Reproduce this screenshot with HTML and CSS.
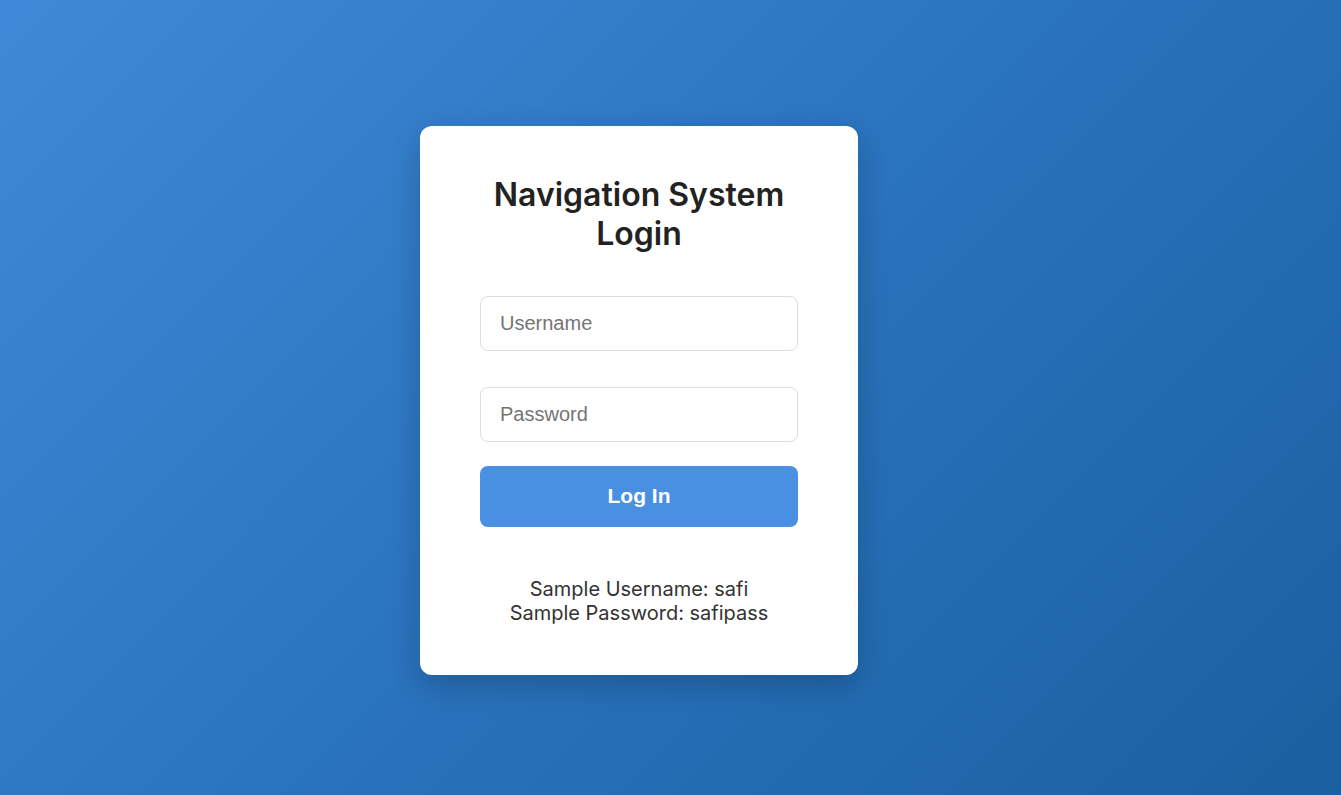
FILE: index.html
```html
<!DOCTYPE html>
<html lang="en">
<head>
<meta charset="utf-8">
<title>Navigation System Login</title>
<link rel="stylesheet" href="styles.css">
</head>
<body>
  <main class="login-card">
    <h1 class="login-title">Navigation System Login</h1>
    <form class="login-form">
      <input class="login-input" type="text" placeholder="Username">
      <input class="login-input" type="password" placeholder="Password">
      <button class="login-button" type="button">Log In</button>
    </form>
    <p class="sample-info">Sample Username: safi<br>Sample Password: safipass</p>
  </main>
</body>
</html>
```

FILE: styles.css
```css
* {
  box-sizing: border-box;
}

html, body {
  margin: 0;
  height: 100%;
}

body {
  font-family: Inter, "Noto Sans", sans-serif;
  background: linear-gradient(135deg, #3f89d8 0%, #2a73bd 50%, #1a60a0 100%);
  display: flex;
  align-items: center;
  justify-content: center;
  padding: 6px 63px 0 0;
}

.login-card {
  width: 438px;
  background: #fff;
  border-radius: 12px;
  padding: 50px 60px;
  box-shadow: 0 10px 30px rgba(0, 0, 0, 0.2);
  text-align: center;
}

.login-title {
  margin: 0 0 43px;
  font-size: 32px;
  line-height: 1.2;
  font-weight: 600;
  color: #222;
}

.login-form {
  display: flex;
  flex-direction: column;
}

.login-input {
  width: 100%;
  height: 55px;
  padding: 0 19px;
  font-family: "Liberation Sans", Arial, sans-serif;
  font-size: 20px;
  color: #333;
  border: 1px solid #ddd;
  border-radius: 8px;
  outline: none;
  background: #fff;
}

.login-input + .login-input {
  margin-top: 36px;
}

.login-input::placeholder {
  color: #757575;
}

.login-button {
  margin-top: 24px;
  height: 61px;
  border: none;
  border-radius: 8px;
  background: #4a90e2;
  color: #fff;
  font-family: "Liberation Sans", Arial, sans-serif;
  font-size: 21px;
  font-weight: bold;
  cursor: pointer;
}

.sample-info {
  margin: 50px 0 0;
  font-size: 20px;
  line-height: 24px;
  color: #333;
}
```
